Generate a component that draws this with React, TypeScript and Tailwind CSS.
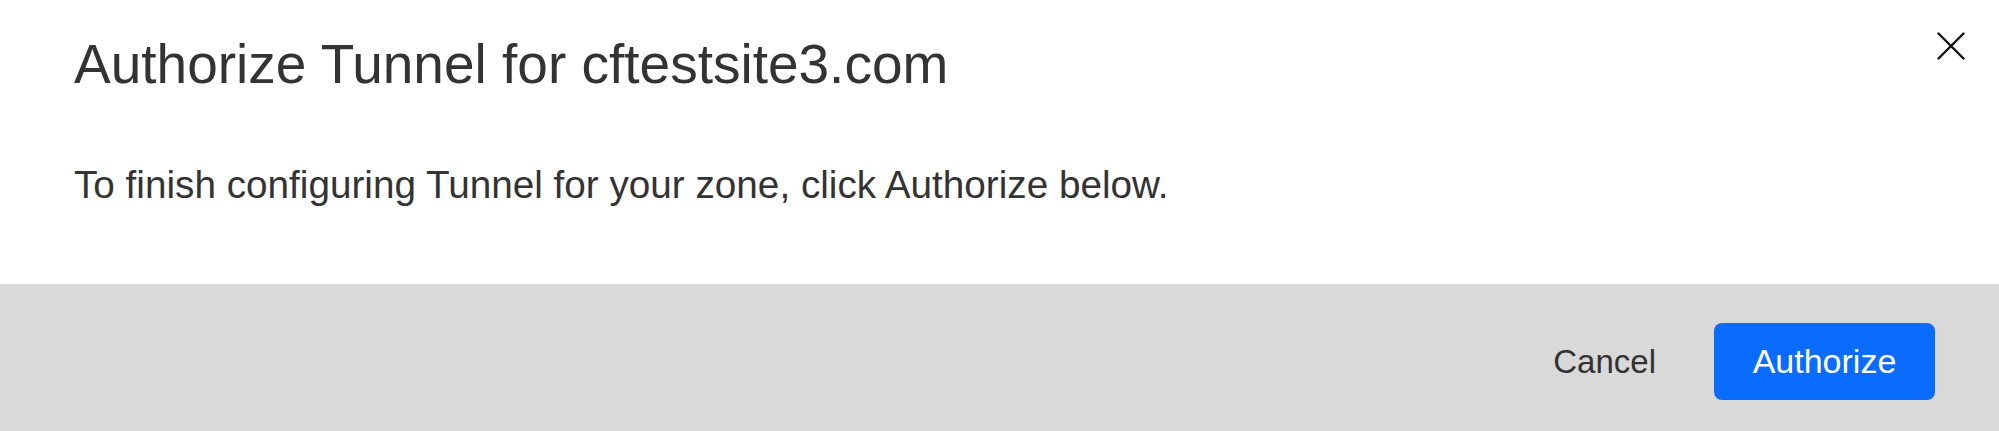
import React from 'react';

const font = { fontFamily: '"Liberation Sans", Arial, sans-serif' };

const CloseIcon = () => (
    <svg width="28" height="28" viewBox="0 0 28 28" fill="none" stroke="#111" strokeWidth="2.4" strokeLinecap="round">
        <line x1="1.5" y1="1.5" x2="26.5" y2="26.5" />
        <line x1="26.5" y1="1.5" x2="1.5" y2="26.5" />
    </svg>
);

const App = () => {
    return (
        <div className="flex h-[431px] w-full flex-col bg-white text-[#333333]" style={font}>
            <div className="flex flex-1 flex-col">
                <div className="flex items-start justify-between pl-[74px] pr-[34px] pt-[32px]">
                    <h2 className="text-[55px] font-normal leading-[65px]">
                        Authorize Tunnel for cftestsite3.com
                    </h2>
                    <button className="h-[28px] w-[28px]" aria-label="Close">
                        <CloseIcon />
                    </button>
                </div>
                <p className="mt-[65px] pl-[74px] text-[38.7px] leading-[46px]">
                    To finish configuring Tunnel for your zone, click Authorize below.
                </p>
            </div>
            <div className="flex h-[147px] items-start justify-end bg-[#d9d9d9] pr-[64px] pt-[39px]">
                <button className="mr-[58px] flex h-[77px] items-center text-[33px] text-[#333333]">
                    Cancel
                </button>
                <button className="flex h-[77px] w-[221px] items-center justify-center rounded-[8px] bg-[#0a6cff] text-[34px] text-white">
                    Authorize
                </button>
            </div>
        </div>
    );
};

export default App;
